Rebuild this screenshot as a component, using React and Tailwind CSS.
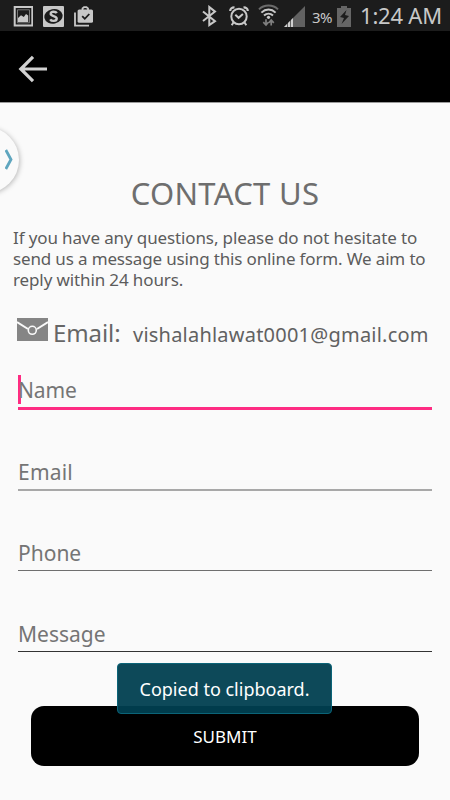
import React from 'react';

const fields = [
  { label: 'Name', height: 'h-[81px]', tracking: 'tracking-[-0.1px]', active: true },
  { label: 'Email', height: 'h-[81px]', tracking: 'tracking-[0.2px]', line: 'h-[2px] bg-[#a8a8a8]' },
  { label: 'Phone', height: 'h-[81px]', tracking: 'tracking-[0px]', line: 'h-px bg-[#6f6f6f]' },
  { label: 'Message', height: 'h-[34px]', tracking: 'tracking-[0px]', line: 'h-px bg-[#333]' },
];

const StatusBar = () => (
  <div className="h-[31px] shrink-0 flex items-center bg-[#1c1c1c] text-[#c8c8c8]">
    <svg className="ml-[13px] w-5 h-[22px]" viewBox="0 0 20 22" fill="none">
      <path d="M1.7 2h17.6v18.5H1.7z" stroke="#c8c8c8" strokeWidth="2" />
      <path d="M4.5 4.8h12v13h-12z" stroke="#777" strokeWidth="1" />
      <path d="M5 17v-4l3-2.7 2.8 1.7 2.2-3 2.2 1.5V17z" fill="#c8c8c8" />
    </svg>
    <svg className="ml-[10px] w-[21px] h-[22px]" viewBox="0 0 21 22">
      <rect x="0" y="1" width="21" height="21" rx="1" fill="#c8c8c8" />
      <ellipse cx="10.5" cy="11.3" rx="9.2" ry="7.3" fill="#1c1c1c" transform="rotate(-12 10.5 11.3)" />
      <path d="M13.8 8.2C12.8 6.4 7.6 6 7.7 8.9c.1 2.6 6 1.7 6 4.6 0 3.3-5.4 2.8-6.5.8" stroke="#c8c8c8" strokeWidth="2.4" fill="none" />
    </svg>
    <svg className="ml-[10px] w-[20px] h-[22px]" viewBox="0 0 20 22" fill="none">
      <path d="M1 7.4V20.6H15" stroke="#c8c8c8" strokeWidth="1.8" />
      <path d="M8.5 5V3.4L10 2.2h2.5L14 3.4V5" stroke="#c8c8c8" strokeWidth="1.8" />
      <rect x="3.6" y="4.5" width="15.4" height="13.3" rx="1.6" fill="#c8c8c8" />
      <path d="M8.2 11.2l2.6 2.6L15.3 9" stroke="#1c1c1c" strokeWidth="1.8" />
    </svg>

    <svg className="ml-[108px] w-[15px] h-[22px]" viewBox="0 0 15 22" fill="none" stroke="#c8c8c8" strokeWidth="2">
      <path d="M1 6.5l12 9.6L7.3 20V2L13 6.6 1 16" />
    </svg>
    <svg className="ml-[12px] w-[20px] h-[22px]" viewBox="0 0 20 22" fill="none" stroke="#c8c8c8" strokeWidth="2">
      <circle cx="10" cy="11.5" r="7.7" />
      <path d="M1.2 6C1.2 3.8 3 2.2 5.5 2.3M18.8 6c0-2.2-1.8-3.8-4.3-3.7" strokeWidth="2.2" />
      <path d="M4.6 17.2L2.7 20.2M15.4 17.2l1.9 3M6.3 9.8l3.3 3 4.3-3.7" />
    </svg>
    <svg className="ml-[9px] w-[21px] h-[23px]" viewBox="0 0 21 23" fill="none" strokeWidth="2">
      <path d="M1 5.4C6 .2 15 .2 20 5.4" stroke="#6b6b6b" />
      <path d="M3.4 8.6c4.2-4 10-4 14.2 0M6 11.5c2.7-2.5 6.3-2.5 9 0" stroke="#c8c8c8" />
      <circle cx="10.5" cy="13.3" r="1.6" fill="#c8c8c8" />
      <path d="M8 15.3v5.2M5.3 18.2L8 21l2.4-2.8M13.2 21.5v-5.2M10.8 18.8l2.4-2.7 2.6 2.7" stroke="#808080" strokeWidth="1.7" />
    </svg>
    <svg className="ml-[5px] w-[21px] h-[22px]" viewBox="0 0 21 22">
      <path d="M0 22L21 1v21z" fill="#626262" />
      <path d="M0 22l3-3v3zM4 22v-4l2-2v6zM7 22v-7l2-2v9z" fill="#d0d0d0" />
    </svg>
    <span className="ml-[7px] w-[22px] text-[15px] leading-[22px] tracking-[-0.6px] pt-[2px] whitespace-nowrap">3%</span>
    <svg className="ml-[3px] w-[14px] h-[22px]" viewBox="0 0 14 22">
      <path d="M4 1h6v2h4v19H0V3h4z" fill="#666" />
      <path d="M9.5 5L3 12l4 1-2.5 6L12 11l-4-1z" fill="#1c1c1c" />
    </svg>
    <span className="ml-[9px] text-[22px] leading-[31px] tracking-[-0.2px] whitespace-nowrap">1:24 AM</span>
  </div>
);

const Field = ({ label, height, tracking, active, line }) => (
  <div className={height}>
    <div className={`relative ${active ? 'h-[35px] border-b-[3px] border-[#fe2b82]' : ''}`}>
      {active && <span className="absolute left-0 top-0 w-[3px] h-[29px] bg-[#fe2b82]" />}
      <span className={`relative block text-[21px] text-[#757575] ${active ? 'leading-[31px]' : 'leading-[33px]'} ${tracking}`}>
        {label}
      </span>
      {!active && <div className={line} />}
    </div>
  </div>
);

const App = () => {
  return (
    <div className="relative w-[450px] h-[800px] overflow-hidden flex flex-col bg-[#fafafa] font-['Noto_Sans',sans-serif]">
      <StatusBar />

      <header className="h-[72px] shrink-0 flex items-center pl-[18px] pb-[2px] bg-black border-b border-[#9a9a9a]">
        <svg className="mt-[6px] w-[30px] h-[28px]" viewBox="0 0 30 28" fill="none" stroke="#d2d2d2" strokeWidth="3.2">
          <path d="M29 14H3M15 1.8L2.8 14 15 26.2" />
        </svg>
      </header>

      {/* Side panel handle */}
      <div className="absolute left-[-47px] top-[127px] w-[66px] h-[66px] rounded-full bg-[#fafafa] shadow-[1px_1px_5px_rgba(0,0,0,0.25)]">
        <svg className="absolute left-[52px] top-[22px] w-[8px] h-[21px]" viewBox="0 0 8 21" fill="none">
          <path d="M.8 1L6 10.5.8 20" stroke="#5fa6bf" strokeWidth="2.8" />
        </svg>
      </div>

      <main className="flex flex-col">
        <h1 className="mt-[70px] text-center text-[31px] leading-[40px] tracking-[0.3px] text-[#6e6e6e] whitespace-nowrap">CONTACT US</h1>

        <p className="mt-[14px] pl-[13px] text-[17px] leading-[21px] tracking-[-0.12px] text-[#5c5c5c] whitespace-nowrap">
          <span className="block">If you have any questions, please do not hesitate to</span>
          <span className="block tracking-[-0.15px]">send us a message using this online form. We aim to</span>
          <span className="block">reply within 24 hours.</span>
        </p>

        <div className="mt-[23px] h-[40px] pl-[17px] flex items-baseline text-[#666] whitespace-nowrap">
          <svg className="self-start mt-[5px] w-[31px] h-[23px]" viewBox="0 0 31 23">
            <rect width="31" height="23" fill="#858585" />
            <path d="M0 4l11 7M20 11l11-7" stroke="#fafafa" strokeWidth="2" fill="none" />
            <circle cx="15.3" cy="12.3" r="4" stroke="#fafafa" strokeWidth="1.6" fill="none" />
          </svg>
          <span className="ml-[5px] w-[80px] text-[24px] leading-[40px] tracking-[-0.1px]">Email:</span>
          <span className="text-[20px] leading-[40px] tracking-[0.22px] text-[#616161]">vishalahlawat0001@gmail.com</span>
        </div>

        <form className="mt-[22px] mx-[18px] w-[414px]">
          {fields.map((f) => (
            <Field key={f.label} {...f} />
          ))}
        </form>

        <button className="mt-[54px] ml-[31px] w-[388px] h-[60px] rounded-[13px] bg-black pt-[2px] text-white text-[17px]">
          SUBMIT
        </button>
      </main>

      <div className="absolute left-[117px] top-[663px] w-[215px] h-[51px] rounded-[4px] border border-[#0b6478] bg-[#003f50]/95 text-white text-[18px] leading-[50px] text-center whitespace-nowrap">
        Copied to clipboard.
      </div>
    </div>
  );
};

export default App;
